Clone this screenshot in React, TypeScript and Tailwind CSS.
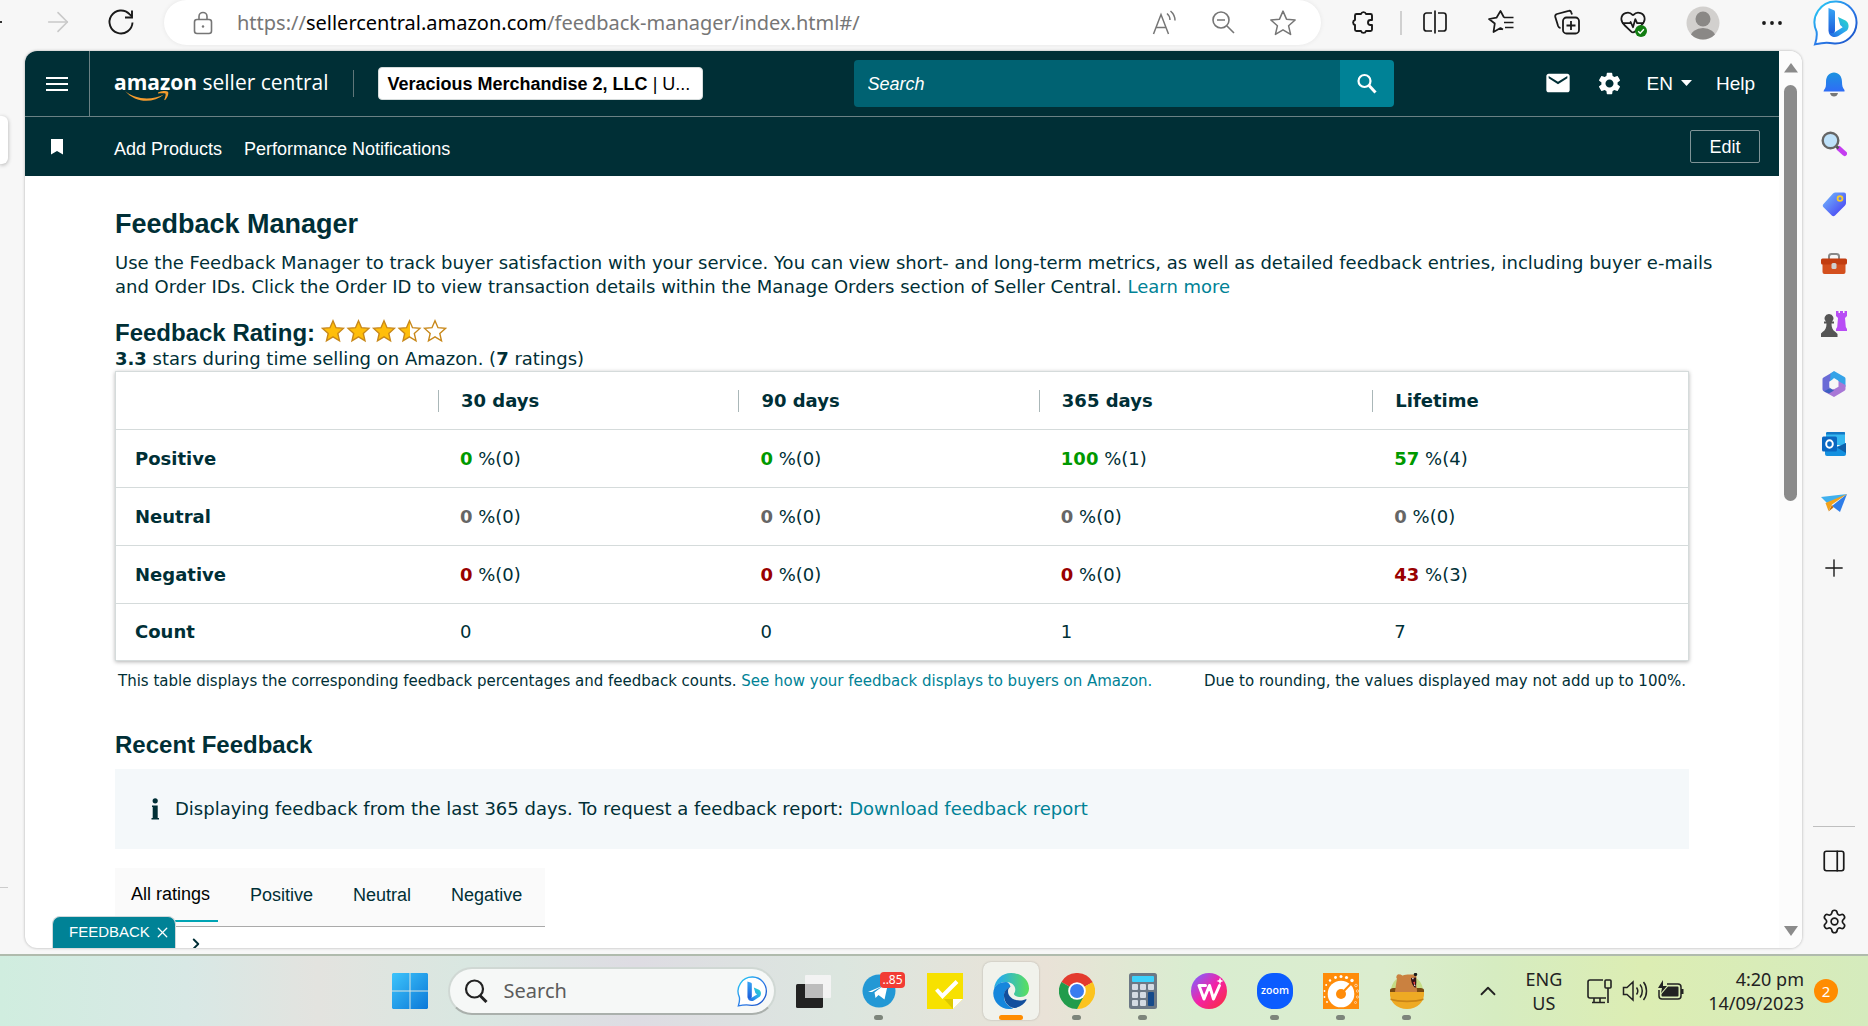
import type { ReactNode } from "react";
import {
  ArrowRight,
  ChevronRight,
  ChevronUp,
  HeartPulse,
  PanelRight,
  Plus,
  Settings,
  X,
} from "lucide-react";
import { MdEmail, MdSettings } from "react-icons/md";

type Tone = "good" | "neutral" | "bad";

interface RatingRow {
  label: string;
  tone: Tone;
  cells: [percent: string, count: string][];
}

const PERIODS = ["30 days", "90 days", "365 days", "Lifetime"];

const ROWS: RatingRow[] = [
  { label: "Positive", tone: "good", cells: [["0", "0"], ["0", "0"], ["100", "1"], ["57", "4"]] },
  { label: "Neutral", tone: "neutral", cells: [["0", "0"], ["0", "0"], ["0", "0"], ["0", "0"]] },
  { label: "Negative", tone: "bad", cells: [["0", "0"], ["0", "0"], ["0", "0"], ["43", "3"]] },
];

const COUNTS = ["0", "0", "1", "7"];

const TONES: Record<Tone, string> = {
  good: "text-[#009900]",
  neutral: "text-[#666666]",
  bad: "text-[#990000]",
};

const STAR = "M12 1.8l3 6.9 7.4.7-5.6 5 1.7 7.4L12 17.9l-6.5 3.9 1.7-7.4-5.6-5 7.4-.7z";

function IconButton({ label, className = "", children }: { label: string; className?: string; children: ReactNode }) {
  return (
    <button type="button" aria-label={label} className={`flex shrink-0 items-center justify-center ${className}`}>
      {children}
    </button>
  );
}

function BingLogo({ id, className }: { id: string; className: string }) {
  return (
    <svg viewBox="0 0 46 46" className={className}>
      <defs>
        <linearGradient id={`${id}-ring`} x1="0" y1="0" x2="1" y2="1">
          <stop offset="0" stopColor="#27d3f5" />
          <stop offset="0.5" stopColor="#2b7de9" />
          <stop offset="1" stopColor="#1a4fc4" />
        </linearGradient>
        <linearGradient id={`${id}-stem`} x1="0" y1="0" x2="0" y2="1">
          <stop offset="0" stopColor="#37a5f5" />
          <stop offset="1" stopColor="#1b57d8" />
        </linearGradient>
        <linearGradient id={`${id}-bowl`} x1="1" y1="0" x2="0" y2="1">
          <stop offset="0" stopColor="#25dcc0" />
          <stop offset="0.5" stopColor="#2aa6ee" />
          <stop offset="1" stopColor="#2161e0" />
        </linearGradient>
      </defs>
      <path
        d="M23.5 1.5a21 21 0 1 1-2 42c-6-1-9-1.500-19.500.8 1.500-5 2.500-8 1.500-13A21 21 0 0 1 23.5 1.5z"
        fill="#fff"
        stroke={`url(#${id}-ring)`}
        strokeWidth="2"
      />
      <path d="M15.5 8l5.500 2.200c.6.3 1 .8 1 1.500V31l-2 4.500c-3-1-4.500-2.500-4.500-5z" fill={`url(#${id}-stem)`} />
      <path
        d="M25 17l7.500 3.500c3.500 2 4 7 1.500 10l-9 5.800c-3.500 1.800-8.500.7-9.300-4.500 1.500 2 4 1.700 6 .5l8-5-2.500-2.200z"
        fill={`url(#${id}-bowl)`}
      />
    </svg>
  );
}

function BrowserBar() {
  const tool = "w-[66px] h-11";
  return (
    <header className="flex h-[51px] shrink-0 bg-[#f7f7f7] text-[#1a1a1a]">
      <div className="flex h-11 w-[164px] shrink-0 items-center">
        <span className="h-0.5 w-0.5 bg-[#333]" />
        <IconButton label="Forward" className="ml-10 text-[#c9c9c9]">
          <ArrowRight size={32} strokeWidth={1.2} />
        </IconButton>
        <IconButton label="Refresh" className="ml-8">
          <svg width="30" height="30" viewBox="0 0 30 30" fill="none" stroke="currentColor" strokeWidth="1.9">
            <path d="M26.5 15.5A11.5 11.5 0 1 1 23.5 7.2L26 9.500" />
            <path d="M26 3.500v7h-7" />
          </svg>
        </IconButton>
      </div>
      <div className="flex h-[45px] min-w-0 flex-1 items-center rounded-[23px] bg-white pr-6 pl-[27px] text-[#767676] shadow-[0_0_5px_rgba(0,0,0,0.07)]">
        <svg width="24" height="24" viewBox="0 0 24 24" fill="none" stroke="currentColor" strokeWidth="1.6" className="shrink-0">
          <rect x="3.5" y="8.5" width="17" height="14" rx="2.5" />
          <path d="M8 8.500V5.500a4 4 0 0 1 8 0v3" />
          <circle cx="12" cy="15.5" r="1.2" fill="currentColor" stroke="none" />
        </svg>
        <div role="textbox" tabIndex={0} aria-label="Address" className="ml-[22px] flex-1 truncate font-['Noto_Sans',sans-serif] text-xl">
          https://<span className="text-black">sellercentral.amazon.com</span>/feedback-manager/index.html#/
        </div>
        <div className="flex items-center gap-8">
          <IconButton label="Read aloud">
            <svg width="28" height="26" viewBox="0 0 28 26" fill="none" stroke="currentColor" strokeWidth="1.5">
              <path d="M2.500 24L10 4.500 17.500 24M5 17.500h10" />
              <path d="M16 3.500c2 1.700 3 4 3 6.500M19.500 1c3 2.500 4.500 6 4.500 9.500" />
            </svg>
          </IconButton>
          <IconButton label="Zoom out">
            <svg width="26" height="26" viewBox="0 0 26 26" fill="none" stroke="currentColor" strokeWidth="1.6">
              <circle cx="10" cy="10" r="8" />
              <path d="M16 16L23 23M6 10h8" />
            </svg>
          </IconButton>
          <IconButton label="Add to favorites">
            <svg width="28" height="28" viewBox="0 0 24 24" fill="none" stroke="currentColor" strokeWidth="1.3" strokeLinejoin="round">
              <path d={STAR} />
            </svg>
          </IconButton>
        </div>
      </div>
      <IconButton label="Extensions" className="h-11 w-[79px] pl-1">
        <svg width="26" height="26" viewBox="0 0 26 26" fill="none" stroke="currentColor" strokeWidth="1.9" strokeLinejoin="round">
          <path d="M6.500 5H11a2.600 2.600 0 0 1 5 0h4.500A1.500 1.500 0 0 1 22 6.500V11h-1.500a2.500 2.500 0 0 0 0 5H22v4.500a1.500 1.500 0 0 1-1.500 1.500H16a2.600 2.600 0 0 1-5 0H6.500A1.500 1.500 0 0 1 5 20.500V16a2.600 2.600 0 0 1 0-5V6.500A1.500 1.500 0 0 1 6.500 5z" />
        </svg>
      </IconButton>
      <span className="mt-[11px] h-6 w-0.5 bg-[#d0d0d0]" />
      <IconButton label="Split screen" className={tool}>
        <svg width="26" height="26" viewBox="0 0 26 26" fill="none" stroke="currentColor" strokeWidth="1.7">
          <path d="M10 4H4.500A2.500 2.500 0 0 0 2 6.500v13A2.500 2.500 0 0 0 4.500 22H10M16 4h5.500A2.500 2.500 0 0 1 24 6.500v13a2.500 2.500 0 0 1-2.500 2.500H16M13 1.500v23" />
        </svg>
      </IconButton>
      <IconButton label="Favorites" className={tool}>
        <svg width="28" height="28" viewBox="0 0 28 28" fill="none" stroke="currentColor" strokeWidth="1.7" strokeLinejoin="round">
          <path d="M16 21.500l-2.500-1.500-7 4 1.300-8.500L2 11l7.500-1.300L13.500 3l3.500 6.500M17 9.500h9.500M17 14.500h9.500M18 19.500h8.500" />
        </svg>
      </IconButton>
      <IconButton label="Collections" className={tool}>
        <svg width="28" height="28" viewBox="0 0 28 28" fill="none" stroke="currentColor" strokeWidth="1.8">
          <rect x="10" y="9.5" width="16" height="16" rx="3.5" />
          <path d="M18 13v9M13.500 17.500h9M19 6.500l-.8-2.300a2 2 0 0 0-2.500-1.300L4 6A2.500 2.500 0 0 0 2.300 9l2.800 9a3 3 0 0 0 2.400 2" />
        </svg>
      </IconButton>
      <IconButton label="Browser essentials" className={`relative ${tool}`}>
        <HeartPulse size={28} strokeWidth={1.5} />
        <svg width="12" height="12" viewBox="0 0 12 12" className="absolute right-[19px] bottom-[7px]">
          <circle cx="6" cy="6" r="6" fill="#127d12" />
          <path d="M3.200 6.200l2 2 3.700-4" fill="none" stroke="#fff" strokeWidth="1.4" />
        </svg>
      </IconButton>
      <IconButton label="Profile" className="h-[45px] w-[74px]">
        <svg width="34" height="34" viewBox="0 0 34 34">
          <clipPath id="avatar"><circle cx="17" cy="17" r="16.5" /></clipPath>
          <g clipPath="url(#avatar)">
            <rect width="34" height="34" fill="#d2d0ce" />
            <circle cx="17" cy="13" r="7.5" fill="#8a8886" />
            <ellipse cx="17" cy="31" rx="12.5" ry="9" fill="#8a8886" />
          </g>
        </svg>
      </IconButton>
      <IconButton label="Settings and more" className="h-[45px] w-16">
        <svg width="22" height="6" viewBox="0 0 22 6" fill="currentColor">
          <circle cx="3" cy="3" r="1.9" /><circle cx="11" cy="3" r="1.9" /><circle cx="19" cy="3" r="1.9" />
        </svg>
      </IconButton>
      <IconButton label="Bing Chat" className="h-[46px] w-16">
        <BingLogo id="bing-side" className="size-[46px]" />
      </IconButton>
    </header>
  );
}

function SellerHeader() {
  return (
    <div className="bg-[#002f36] font-['Liberation_Sans',Arial,sans-serif] text-lg text-white">
      <div className="flex h-[66px] items-center border-b border-[#6a8184]">
        <IconButton label="Menu" className="h-full w-[65px] border-r border-[#6a8184]">
          <svg width="22" height="16" viewBox="0 0 22 16" stroke="#fff" strokeWidth="2">
            <path d="M0 2h22M0 8h22M0 14h22" />
          </svg>
        </IconButton>
        <a href="#home" className="relative ml-6 pb-1 font-['Open_Sans',sans-serif] text-[21px] leading-8 whitespace-nowrap">
          <span className="font-bold">amazon</span> seller central
          <svg width="46" height="12" viewBox="0 0 46 12" className="absolute top-[25px] left-2.5" fill="#f49b2e">
            <path d="M1 0c10 8 25 10 39 3.500C29 12.500 12 12.500 1 0z" />
            <path d="M34 1.500c3.500-1.800 8-2 10-.7 1 2-.5 6-3 8.500l-.8-.5c1-2.500 1.800-5 1.200-6.200-1.500-.7-4.500-.5-7.400-.1z" />
          </svg>
        </a>
        <span className="ml-6 h-[27px] w-px bg-[#5f7679]" />
        <button type="button" className="ml-6 h-[33px] w-[325px] truncate rounded border border-[#d5dbdb] bg-white px-[9px] text-left text-black">
          <b>Veracious Merchandise 2, LLC</b> | U...
        </button>
        <form className="ml-auto flex h-[47px] w-[540px]">
          <input type="text" aria-label="Search Seller Central" placeholder="Search" className="min-w-0 flex-1 rounded-l-sm bg-[#006272] px-3.5 italic placeholder:text-white placeholder:opacity-100" />
          <IconButton label="Submit search" className="w-[54px] rounded-r-sm bg-[#008296]">
            <svg width="22" height="22" viewBox="0 0 22 22" fill="none" stroke="#fff">
              <circle cx="8.5" cy="8" r="6" strokeWidth="2.2" />
              <path d="M13 12.500l6.500 7" strokeWidth="3" />
            </svg>
          </IconButton>
        </form>
        <div className="ml-[150px] flex shrink-0 items-center pr-6 text-[19px]">
          <IconButton label="Messages"><MdEmail size={28} /></IconButton>
          <IconButton label="Settings" className="ml-6"><MdSettings size={27} /></IconButton>
          <button type="button" className="ml-6 flex items-center gap-2">
            EN
            <svg width="11" height="6" viewBox="0 0 11 6" fill="#fff"><path d="M0 0h11L5.500 6z" /></svg>
          </button>
          <a href="#help" className="ml-6">Help</a>
        </div>
      </div>
      <nav className="flex h-[59px] items-center pr-[19px] pl-[26px]">
        <svg width="12" height="16" viewBox="0 0 12 16" fill="#fff"><path d="M0 0h12v15.500l-6-3.500-6 3.500z" /></svg>
        <a href="#add" className="ml-[51px] pt-1">Add Products</a>
        <a href="#performance" className="ml-[22px] pt-1">Performance Notifications</a>
        <button type="button" className="ml-auto h-[33px] w-[70px] rounded-xs border border-[#7f9497]">Edit</button>
      </nav>
    </div>
  );
}

function Stars() {
  return (
    <svg width="126" height="24" viewBox="0 0 126 24" role="img" aria-label="3.3 out of 5 stars">
      <defs>
        <linearGradient id="half"><stop offset="0.5" stopColor="#ffbe0a" /><stop offset="0.5" stopColor="#fff" /></linearGradient>
      </defs>
      {["#ffbe0a", "#ffbe0a", "#ffbe0a", "url(#half)", "#fff"].map((fill, i) => (
        <path key={i} d={STAR} transform={`translate(${i * 25.5} 0)`} fill={fill} stroke="#c8881a" strokeWidth="1.4" />
      ))}
    </svg>
  );
}

function RatingTable() {
  return (
    <table className="w-full table-fixed border-collapse border border-[#d5dbdb] text-left shadow-[0_1px_4px_rgba(0,0,0,0.3)]">
      <colgroup>
        <col className="w-[20.5%]" />
        <col className="w-[19.1%]" />
        <col className="w-[19.1%]" />
        <col className="w-[21.2%]" />
        <col />
      </colgroup>
      <thead>
        <tr className="h-[58px] border-b border-[#d5dbdb]">
          <td />
          {PERIODS.map((period) => (
            <th key={period} scope="col">
              <span className="block border-l border-[#aab7b8] pl-[22px] leading-[22px]">{period}</span>
            </th>
          ))}
        </tr>
      </thead>
      <tbody>
        {ROWS.map((row) => (
          <tr key={row.label} className="h-[58px] border-b border-[#d5dbdb]">
            <th scope="row" className="pl-[19px]">{row.label}</th>
            {row.cells.map(([percent, count], i) => (
              <td key={i} className="pl-[22px]">
                <b className={TONES[row.tone]}>{percent}</b> %({count})
              </td>
            ))}
          </tr>
        ))}
        <tr className="h-[57px]">
          <th scope="row" className="pl-[19px]">Count</th>
          {COUNTS.map((count, i) => (
            <td key={i} className="pl-[22px]">{count}</td>
          ))}
        </tr>
      </tbody>
    </table>
  );
}

function FeedbackPage() {
  const link = "text-[#008296]";
  const heading = "font-['Liberation_Sans',Arial,sans-serif] font-bold";
  return (
    <main className="px-[90px] pt-8 font-['DejaVu_Sans',Verdana,sans-serif] text-lg leading-6 text-[#002f36]">
      <h1 className={`${heading} text-[27px] leading-8`}>Feedback Manager</h1>
      <p className="-mr-10 mt-[11px]">
        Use the Feedback Manager to track buyer satisfaction with your service. You can view short- and long-term metrics, as well as
        detailed feedback entries, including buyer e-mails and Order IDs. Click the Order ID to view transaction details within the
        Manage Orders section of Seller Central. <a href="#learn" className={link}>Learn more</a>
      </p>
      <div className="mt-5 flex gap-1.5">
        <h2 className={`${heading} text-2xl leading-7`}>Feedback Rating:</h2>
        <Stars />
      </div>
      <p><b>3.3</b> stars during time selling on Amazon. (<b>7</b> ratings)</p>
      <RatingTable />
      <div className="mt-2 flex justify-between px-[3px] text-[15px]">
        <p>
          This table displays the corresponding feedback percentages and feedback counts.{" "}
          <a href="#display" className={link}>See how your feedback displays to buyers on Amazon.</a>
        </p>
        <p>Due to rounding, the values displayed may not add up to 100%.</p>
      </div>
      <h2 className={`${heading} mt-[38px] text-2xl leading-7`}>Recent Feedback</h2>
      <div className="mt-2.5 flex h-20 items-center bg-[#f4f8fa] pl-9">
        <svg width="8" height="22" viewBox="0 0 8 22" fill="#002f36"><circle cx="4.2" cy="2.8" r="2.6" /><path d="M1 7.500h5.700V20H8v1.500H.5V20h1.200V9H1z" /></svg>
        <p className="ml-4">
          Displaying feedback from the last 365 days. To request a feedback report:{" "}
          <a href="#report" className={link}>Download feedback report</a>
        </p>
      </div>
      <div role="tablist" className="mt-[19px] flex h-[59px] w-fit border-b border-[#aaa] bg-[#fafafa] pr-[15px] pl-2 font-['Liberation_Sans',Arial,sans-serif] text-lg">
        <button type="button" role="tab" aria-selected="true" className="mb-1 border-b-2 border-[#00a4b4] px-2 text-black">All ratings</button>
        <button type="button" role="tab" aria-selected="false" className="mb-1 ml-6 px-2">Positive</button>
        <button type="button" role="tab" aria-selected="false" className="mb-1 ml-6 px-2">Neutral</button>
        <button type="button" role="tab" aria-selected="false" className="mb-1 ml-6 px-2">Negative</button>
      </div>
      <ChevronRight size={18} strokeWidth={2.5} className="mt-2 ml-[72px]" />
    </main>
  );
}

function Scrollbar() {
  return (
    <div className="flex w-[23px] shrink-0 flex-col items-center bg-[#fcfcfc] pt-3 pb-3">
      <svg width="14" height="10" viewBox="0 0 14 10" fill="#8b8b8b"><path d="M7 0l7 9.500H0z" /></svg>
      <span className="mt-3 h-[416px] w-[13px] rounded-full bg-[#8b8b8b]" />
      <svg width="14" height="10" viewBox="0 0 14 10" fill="#8b8b8b" className="mt-auto"><path d="M0 0h14L7 10z" /></svg>
    </div>
  );
}

const SIDE_APPS: { name: string; icon: ReactNode }[] = [
  {
    name: "Notifications",
    icon: (
      <>
        <path d="M3 19c2-2 2-5 2-8C5 5 8.500 1.500 13 1.500S21 5 21 11c0 3 .5 6 2.500 8v1.500h-21z" fill="url(#blue)" />
        <path d="M9 22h8c-.5 2.500-2 3.500-4 3.500S9.500 24.500 9 22z" fill="#777" />
      </>
    ),
  },
  {
    name: "Search",
    icon: (
      <>
        <path d="M18 17.500l5.500 5" stroke="#c43df0" strokeWidth="5" strokeLinecap="round" />
        <path d="M14.500 14.500l3 3" stroke="#555" strokeWidth="2.5" />
        <circle cx="9.5" cy="9.5" r="7.8" fill="#bfe2fa" stroke="#666" strokeWidth="2.4" />
      </>
    ),
  },
  {
    name: "Shopping",
    icon: (
      <>
        <path d="M14.500 1.500H23a2 2 0 0 1 2 2V12c0 1-.3 1.700-1 2.400L14 24.500c-1 1-2.200 1-3.200 0l-8.300-8.300c-1-1-1-2.200 0-3.200L12 2.500c.7-.7 1.500-1 2.500-1z" fill="url(#violet)" />
        <circle cx="19" cy="7.500" r="2.4" fill="none" stroke="#f7cc27" strokeWidth="1.8" />
      </>
    ),
  },
  {
    name: "Tools",
    icon: (
      <>
        <path d="M8 8V5.500A2.500 2.500 0 0 1 10.500 3h5A2.500 2.500 0 0 1 18 5.500V8" fill="none" stroke="#888" strokeWidth="2" />
        <path d="M1.500 12h23v9a2 2 0 0 1-2 2h-19a2 2 0 0 1-2-2z" fill="#d4501e" />
        <rect x="0" y="7.5" width="26" height="6" rx="1.5" fill="#c23d10" />
        <rect x="10.500" y="12" width="5" height="6" rx="1.5" fill="#cfcfcf" />
      </>
    ),
  },
  {
    name: "Games",
    icon: (
      <>
        <path d="M15 0h2.500v2H19V0h3v2h1.500V0H26v5l-2 2 .8 9L26 18v2H15v-2l1.200-2L17 7l-2-2z" fill="#b84df5" />
        <path d="M8 3a4.300 4.300 0 0 1 3 7.500h2v2h-2.500c0 4 1 6.500 4 8.500l2 2v3h-17v-3l2-2c3-2 4-4.500 4-8.500H3v-2h2A4.300 4.300 0 0 1 8 3z" fill="#555" />
      </>
    ),
  },
  {
    name: "Microsoft 365",
    icon: (
      <>
        <path d="M12 1L2.500 6.500a2 2 0 0 0-1 2V18c0 1.500.8 2.500 2 2.500L8.500 19V11l1.500-2z" fill="#6a6bd6" />
        <path d="M9.500 2.500L13 0l10.500 6a2 2 0 0 1 1 1.800V16L19 12 17 9.500 13 7 9 11z" fill="#35a3e8" />
        <path d="M24.500 14v4a2 2 0 0 1-1 1.800L13 26 3 20.500c3 .5 7-.5 14-5.500V10z" fill="#a877d6" />
        <path d="M3 20.500L9 17l4 2.500-5 3z" fill="#3d5fc0" />
        <path d="M13 8l4.500 2.500v5.200L13 18.200l-4.500-2.500v-5.200z" fill="#f7f7f7" />
      </>
    ),
  },
  {
    name: "Outlook",
    icon: (
      <>
        <path d="M6 1h17a1 1 0 0 1 1 1v12H5V2z" fill="#35b8f1" />
        <path d="M6 1h17a1 1 0 0 1 1 1v1.500H5V2z" fill="#1479c6" />
        <path d="M4 12l11 4 10-4v11a2 2 0 0 1-2 2H6a2 2 0 0 1-2-2z" fill="#1490df" />
        <path d="M16 16.500l9-4.500v10z" fill="#0f5fa8" />
        <rect x="1" y="5.5" width="15" height="15" rx="1.5" fill="#0a67c1" />
        <ellipse cx="8.500" cy="13" rx="3.3" ry="3.8" fill="none" stroke="#fff" strokeWidth="2" />
      </>
    ),
  },
  {
    name: "Drop",
    icon: (
      <>
        <path d="M0 6l26-3-18 11z" fill="#40b0ee" />
        <path d="M26 3l-7 18-8-6z" fill="#2f7de8" />
        <path d="M26 3L4.500 12l3 8 3.500-6.500z" fill="#f3a21b" />
        <path d="M11 14l-3.500 6.500 5-4z" fill="#c46f0b" />
      </>
    ),
  },
];

function Sidebar() {
  return (
    <aside className="flex w-[66px] shrink-0 flex-col items-center bg-[#f7f7f7] py-[3px] pr-0.5 text-[#1a1a1a]">
      <svg className="absolute size-0">
        <defs>
          <linearGradient id="blue" x1="0" y1="0" x2="0" y2="1"><stop stopColor="#1c93e0" /><stop offset="1" stopColor="#2f6cf6" /></linearGradient>
          <linearGradient id="violet" x1="0" y1="0" x2="1" y2="1"><stop offset="0.2" stopColor="#6aa4fa" /><stop offset="1" stopColor="#4534f2" /></linearGradient>
        </defs>
      </svg>
      {SIDE_APPS.map((app) => (
        <IconButton key={app.name} label={app.name} className="h-[60px] w-full">
          <svg width="26" height="26" viewBox="0 0 26 26" fill="none">{app.icon}</svg>
        </IconButton>
      ))}
      <IconButton label="Customize" className="mt-1 h-[60px] w-full"><Plus size={28} strokeWidth={1.2} /></IconButton>
      <span className="mt-auto h-px w-[42px] bg-[#bfbfbf]" />
      <IconButton label="Toggle sidebar" className="mt-1 h-[60px] w-full"><PanelRight size={26} strokeWidth={1.6} /></IconButton>
      <IconButton label="Sidebar settings" className="h-[60px] w-full"><Settings size={27} strokeWidth={1.5} /></IconButton>
    </aside>
  );
}

interface TaskApp {
  name: string;
  running?: boolean;
  active?: boolean;
  badge?: string;
  icon: ReactNode;
}

const TASK_APPS: TaskApp[] = [
  {
    name: "Task view",
    icon: (
      <>
        <rect x="1" y="11" width="27" height="24" rx="1.5" fill="#222" />
        <rect x="10" y="2" width="26" height="23" rx="1" fill="#f3f3f3" />
        <rect x="10" y="11" width="18" height="14" fill="#bdbdbd" />
      </>
    ),
  },
  {
    name: "Telegram",
    running: true,
    badge: "..85",
    icon: (
      <>
        <circle cx="18" cy="18" r="16.5" fill="#2398d5" />
        <path d="M7 19l20-8.500-3.500 16-6-4.500-3 3-1-5.500 9-7-11.500 6.500z" fill="#fff" />
      </>
    ),
  },
  {
    name: "Sticky notes",
    icon: (
      <>
        <path d="M0 0h36v26l-10 10H0z" fill="#f7e100" />
        <path d="M26 26h-9l9 10z" fill="#c9b800" opacity="0.6" />
        <path d="M26 36V26h10z" fill="#fff" />
        <path d="M9.500 16.500l6 6.500L30 8.500" fill="none" stroke="#fff" strokeWidth="4" />
      </>
    ),
  },
  {
    name: "Microsoft Edge",
    active: true,
    icon: (
      <>
        <path d="M1 16C2 6.500 9 0 18 0c10.500 0 18 7 18 15.500 0 5-3.500 8.500-8.500 8.500-4.500 0-6.500-1.700-6.500-3 0-1 1.300-1.500 1.300-4.500C22.300 12 18 9 13 9 7 9 3 12 1 16z" fill="url(#edge-top)" />
        <path d="M13 9C6 9 .8 13 .3 19.500-.3 28 7 36 16 36c1.500 0 3-.2 4.200-.6C14 33 10.500 28 11 22.500c.3-4 3-7.500 6.500-9C16.500 10.500 15 9 13 9z" fill="#1686dc" />
        <path d="M17.500 13.500c-4 1.500-7 5.500-6.500 10C11.500 30 17 35.500 22 35c5.500-1 9.500-4.500 11.500-8 .3-.7-.3-1-.9-.7-6.500 3.400-17.600 0-17.600-8 0-2 1-3.800 2.500-4.800z" fill="#134f9d" />
      </>
    ),
  },
  {
    name: "Google Chrome",
    running: true,
    icon: (
      <>
        <path d="M18 18L2.400 9A18 18 0 0 1 33.600 9z" fill="#e33b2e" />
        <path d="M18 18L33.600 9A18 18 0 0 1 18 36z" fill="#fcc31e" />
        <path d="M18 18v0L2.400 9A18 18 0 0 0 18 36l7.500-14z" fill="#219c4c" />
        <path d="M18 9h15.600L25.500 13z" fill="#e33b2e" />
        <circle cx="18" cy="18" r="8.8" fill="#fff" />
        <circle cx="18" cy="18" r="7" fill="#397cf0" />
      </>
    ),
  },
  {
    name: "Calculator",
    running: true,
    icon: (
      <>
        <rect x="4" y="0" width="28" height="36" rx="2.5" fill="#6c7885" />
        <rect x="7" y="3" width="22" height="6" rx="1" fill="#3cd1fb" />
        {[11, 19, 27].map((y) =>
          [7, 15, 23].map((x) => (x === 23 && y > 11 ? null : <rect key={`${x}-${y}`} x={x} y={y} width="6" height="6" rx="1" fill="#d4dbe3" />)),
        )}
        <rect x="23" y="19" width="6" height="14" rx="1" fill="#154a8a" />
      </>
    ),
  },
  {
    name: "WPS Office",
    icon: (
      <>
        <circle cx="18" cy="18" r="18" fill="url(#wps)" />
        <path d="M14.500 12.500H8l5 13.500 5.500-13.500L22.500 26l6-13.500" fill="none" stroke="#fff" strokeWidth="3" strokeLinejoin="round" strokeLinecap="round" />
        <path d="M29 4.500l1 2.500 2.500 1-2.500 1-1 2.500-1-2.500-2.500-1 2.500-1z" fill="#fff" />
      </>
    ),
  },
  {
    name: "Zoom",
    running: true,
    icon: (
      <>
        <rect width="36" height="36" rx="16" fill="#0b5cff" />
        <text x="18" y="21" textAnchor="middle" fontSize="10.5" fontWeight="600" fontFamily="Open Sans" fill="#fff">zoom</text>
      </>
    ),
  },
  {
    name: "Time tracker",
    running: true,
    icon: (
      <>
        <rect width="36" height="36" fill="#ff8c0a" />
        <circle cx="18" cy="21" r="13.3" fill="#fff" />
        <circle cx="18" cy="21" r="5" fill="#ff8c0a" />
        <path d="M20 19L28.500 10" stroke="#ff8c0a" strokeWidth="2" />
        <g fill="#fff">
          <circle cx="18" cy="3.5" r="1.5" /><circle cx="23.5" cy="4.5" r="1.6" /><circle cx="29" cy="7.5" r="1.7" />
          <circle cx="12.500" cy="4.5" r="1.4" /><circle cx="7" cy="7.500" r="1.2" /><circle cx="3.200" cy="12" r="1" />
          <circle cx="1.5" cy="18" r="0.9" /><circle cx="1.5" cy="24" r="0.9" /><circle cx="4" cy="29" r="0.9" />
        </g>
        <g fill="none" stroke="#fff" strokeWidth="0.8" opacity="0.7">
          <circle cx="33" cy="12.500" r="1.3" /><circle cx="34.500" cy="18" r="1.2" /><circle cx="34.500" cy="24" r="1.1" /><circle cx="32.500" cy="29.500" r="1" />
        </g>
      </>
    ),
  },
  {
    name: "Bear",
    running: true,
    icon: (
      <>
        <circle cx="18" cy="18" r="16" fill="#c5dc86" />
        <path d="M1 17c0-1.500 2-2 5-2h24c3 0 5 .5 5 2v3H1z" fill="#7a4a12" />
        <path d="M6 19c.5-4 1-8 2-13a2.800 2.800 0 0 1 3-4.500c1 0 2 .7 2.500 1.200C17 1 21 1.500 24 1.500c2 0 3.500.5 3.500 2.500 0 2-1.500 3.500-.5 7 .8 2 1 5 1 8z" fill="#ca8140" />
        <path d="M22 5l5-.5c.5 3 .5 6.500-.5 10.500-2.500-1.500-4.500-5.500-4.500-10z" fill="#351015" />
        <path d="M24 9.500l2-1v4z" fill="#e34545" />
        <path d="M23 5l1 1.800.8-2M26.500 13l-.8-1.800-.8 1.500" fill="#fff" />
        <circle cx="26.500" cy="1.500" r="1.7" fill="#1b1b1b" />
        <path d="M1 19h34c1 10-7 17-17 17S0 29 1 19z" fill="#eeaa24" />
        <path d="M1.500 25.500c8 2.500 25 2.500 33 0v1.500c-8 3-25 3-33 0z" fill="#c98517" />
      </>
    ),
  },
];

function Taskbar() {
  return (
    <footer className="flex h-[72px] shrink-0 items-center border-t-2 border-[#b0bbad] bg-[linear-gradient(90deg,#d0eddf_0%,#d8e8e5_10%,#e3e3df_17%,#d9e7e1_25%,#dedce3_34%,#dce6df_45%,#e9e2d7_56%,#d9edd0_64%,#dbedcf_74%,#d6ecc1_80%,#dcedb3_88%,#d5ebbd_100%)] font-['Noto_Sans',sans-serif] text-[#222]">
      <div className="w-1/5" />
      <IconButton label="Start" className="w-[72px]">
        <svg width="36" height="36" viewBox="0 0 36 36">
          <linearGradient id="start" x1="0" y1="0" x2="1" y2="1"><stop stopColor="#3ec4fb" /><stop offset="1" stopColor="#0b78d8" /></linearGradient>
          <path d="M1 0h16.500v17.500H0V1zM18.500 0H35l1 1v16.500H18.500zM0 18.500h17.500V36H1l-1-1zM18.500 18.500H36V35l-1 1H18.500z" fill="url(#start)" />
        </svg>
      </IconButton>
      <form className="ml-0.5 flex h-12 w-[328px] shrink-0 items-center rounded-full border-2 border-b-[#aab0ac] border-[#d0d8d4] bg-[#f6f8f7] pr-1.5 pl-3.5">
        <svg width="24" height="24" viewBox="0 0 24 24" fill="none" stroke="#222" strokeWidth="2.2">
          <circle cx="10.500" cy="10" r="8.500" />
          <path d="M16 16.500l6.500 6.500" strokeWidth="3" />
        </svg>
        <input type="text" aria-label="Search Windows" placeholder="Search" className="ml-4 min-w-0 flex-1 text-xl placeholder:text-[#5c5c5c]" />
        <BingLogo id="bing-task" className="size-[31px]" />
      </form>
      <svg className="absolute size-0">
        <defs>
          <linearGradient id="edge-top"><stop offset="0.2" stopColor="#29aee3" /><stop offset="1" stopColor="#5be05c" /></linearGradient>
          <linearGradient id="wps" x1="0" y1="0" x2="1" y2="1"><stop offset="0.1" stopColor="#8a5cf8" /><stop offset="0.5" stopColor="#f322a6" /><stop offset="1" stopColor="#fb2d34" /></linearGradient>
        </defs>
      </svg>
      <div className="ml-1 flex h-full items-center">
        {TASK_APPS.map((app) => (
          <button key={app.name} type="button" aria-label={app.name} className="flex w-[66px] justify-center">
            <span className={`relative flex h-[58px] w-14 items-center justify-center rounded-lg ${app.active ? "bg-[#f1f2ec] shadow-[0_0_2px_rgba(0,0,0,0.25)]" : ""}`}>
              <svg width="36" height="36" viewBox="0 0 36 36">{app.icon}</svg>
              {app.badge && (
                <span className="absolute top-2.5 right-0.5 rounded bg-[#f23c34] px-0.5 text-xs leading-4 text-white">{app.badge}</span>
              )}
              {app.active && <span className="absolute bottom-0 h-[5px] w-6 rounded-full bg-[#ff8c00]" />}
              {app.running && <span className="absolute bottom-0 h-[5px] w-[9px] rounded-full bg-[#7d857b]" />}
            </span>
          </button>
        ))}
      </div>
      <div className="ml-auto flex shrink-0 items-center pr-[30px] text-lg leading-6">
        <IconButton label="Show hidden icons"><ChevronUp size={26} strokeWidth={1.7} /></IconButton>
        <p className="ml-6 text-center">ENG<br />US</p>
        <svg width="26" height="26" viewBox="0 0 26 26" fill="none" stroke="currentColor" strokeWidth="1.6" className="ml-6">
          <path d="M17 2H4a2 2 0 0 0-2 2v14a2 2 0 0 0 2 2h16M8 20v4M14 20v4M6 24.500h13M22 10v15" />
          <rect x="19" y="2" width="6" height="8" rx="1" />
        </svg>
        <svg width="26" height="24" viewBox="0 0 26 24" fill="none" stroke="currentColor" strokeWidth="1.5" className="ml-2.5">
          <path d="M1.500 8.500H5L11 3v18l-6-5.500H1.500zM14.500 8.500c1.500 2 1.500 5 0 7M18 5.500c3 3.500 3 9.500 0 13M21.500 3c4 5 4 13 0 18" />
        </svg>
        <svg width="26" height="22" viewBox="0 0 26 22" fill="currentColor" className="ml-2.5">
          <path d="M9 4h11a3 3 0 0 1 3 3v9a3 3 0 0 1-3 3H4a3 3 0 0 1-3-3v-6" fill="none" stroke="currentColor" strokeWidth="1.5" />
          <path d="M10 6.500h9.500a1 1 0 0 1 1 1v8a1 1 0 0 1-1 1h-15a1 1 0 0 1-1-1v-1.500zM23 9h2.500v5H23zM5 0L0 8h4l-1 5 6-7H5z" />
        </svg>
        <p className="ml-6 text-right">4:20 pm<br />14/09/2023</p>
        <span className="ml-2.5 flex size-6 items-center justify-center rounded-full bg-[#ff8c00] text-[15px] text-white">2</span>
      </div>
    </footer>
  );
}

export default function App() {
  return (
    <div className="flex h-screen flex-col overflow-hidden bg-[#f7f7f7]">
      <BrowserBar />
      <div className="flex min-h-0 flex-1">
        <div className="flex w-[25px] shrink-0 flex-col items-start pt-[65px] pb-[66px]">
          <span className="h-12 w-2 rounded-r-md bg-white shadow-[0_1px_4px_rgba(0,0,0,0.3)]" />
          <span className="mt-auto h-px w-2 bg-[#ccc]" />
        </div>
        <div className="relative mb-1.5 flex min-w-0 flex-1 overflow-hidden rounded-xl bg-white shadow-[0_0_3px_rgba(0,0,0,0.3)]">
          <div className="min-w-0 flex-1 overflow-hidden">
            <SellerHeader />
            <FeedbackPage />
          </div>
          <Scrollbar />
          <div className="absolute bottom-0 left-[27px] flex h-8 items-center gap-1 rounded-t-lg border border-b-0 border-[#cfd8da] bg-[#008296] pr-1 pl-4 font-['Liberation_Sans',Arial,sans-serif] text-[15px] text-white">
            FEEDBACK
            <button type="button" aria-label="Close"><X size={17} strokeWidth={1.8} /></button>
          </div>
        </div>
        <Sidebar />
      </div>
      <Taskbar />
    </div>
  );
}
